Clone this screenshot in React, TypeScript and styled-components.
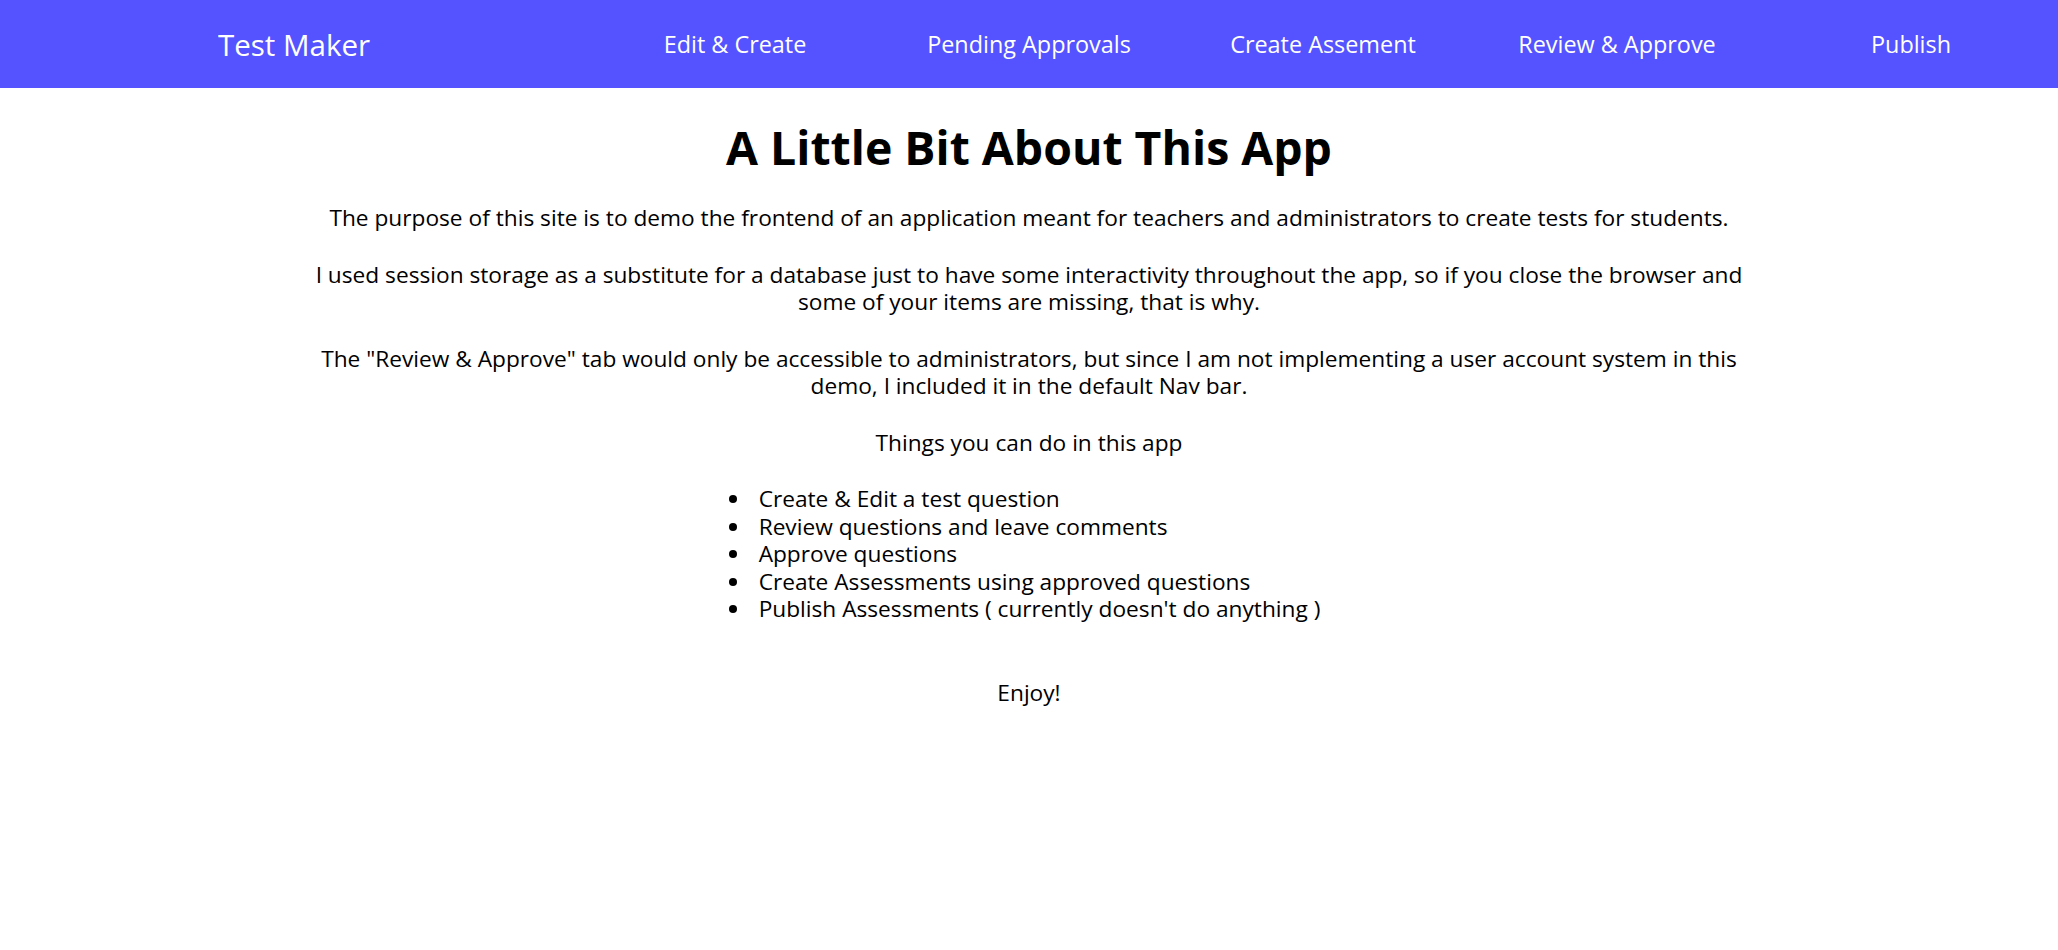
import React from "react";
import styled, { createGlobalStyle } from "styled-components";

const GlobalStyle = createGlobalStyle`
  html, body {
    margin: 0;
    padding: 0;
    background: #ffffff;
  }
  body {
    font-family: "Open Sans", "Noto Sans", sans-serif;
    color: #000000;
  }
`;

const NavBar = styled.nav`
  display: grid;
  grid-template-columns: 2fr repeat(5, 1fr);
  align-items: center;
  justify-items: center;
  height: 88px;
  background: #5453ff;
`;

const Brand = styled.div`
  font-size: 29.5px;
  color: #ffffff;
`;

const NavLink = styled.a`
  font-size: 23.4px;
  color: #ffffff;
  text-decoration: none;
  cursor: pointer;
`;

const Main = styled.main`
  width: 1452px;
  margin: 0 auto;
  text-align: center;
  font-size: 22.7px;
  line-height: 27.5px;
`;

const Title = styled.h1`
  font-size: 46.4px;
  font-weight: 700;
  line-height: 56px;
  margin: 31px 0 29px;
`;

const Para = styled.p<{ $gap?: number }>`
  margin: 0 0 ${(p) => p.$gap ?? 29}px;
`;

const List = styled.ul`
  width: fit-content;
  margin: 0 auto 56px;
  padding: 0 38px 0 52px;
  text-align: left;
`;

const Item = styled.li`
  line-height: 27.5px;
  padding-left: 7px;
`;

const links = [
  "Edit & Create",
  "Pending Approvals",
  "Create Assement",
  "Review & Approve",
  "Publish",
];

const things = [
  "Create & Edit a test question",
  "Review questions and leave comments",
  "Approve questions",
  "Create Assessments using approved questions",
  "Publish Assessments ( currently doesn't do anything )",
];

export default function App() {
  return (
    <>
      <GlobalStyle />
      <NavBar>
        <Brand>Test Maker</Brand>
        {links.map((l) => (
          <NavLink key={l}>{l}</NavLink>
        ))}
      </NavBar>
      <Main>
        <Title>A Little Bit About This App</Title>
        <Para>
          The purpose of this site is to demo the frontend of an application
          meant for teachers and administrators to create tests for students.
        </Para>
        <Para>
          I used session storage as a substitute for a database just to have
          some interactivity throughout the app, so if you close the browser
          and some of your items are missing, that is why.
        </Para>
        <Para>
          The "Review &amp; Approve" tab would only be accessible to
          administrators, but since I am not implementing a user account system
          in this demo, I included it in the default Nav bar.
        </Para>
        <Para>Things you can do in this app</Para>
        <List>
          {things.map((t) => (
            <Item key={t}>{t}</Item>
          ))}
        </List>
        <Para $gap={0}>Enjoy!</Para>
      </Main>
    </>
  );
}
